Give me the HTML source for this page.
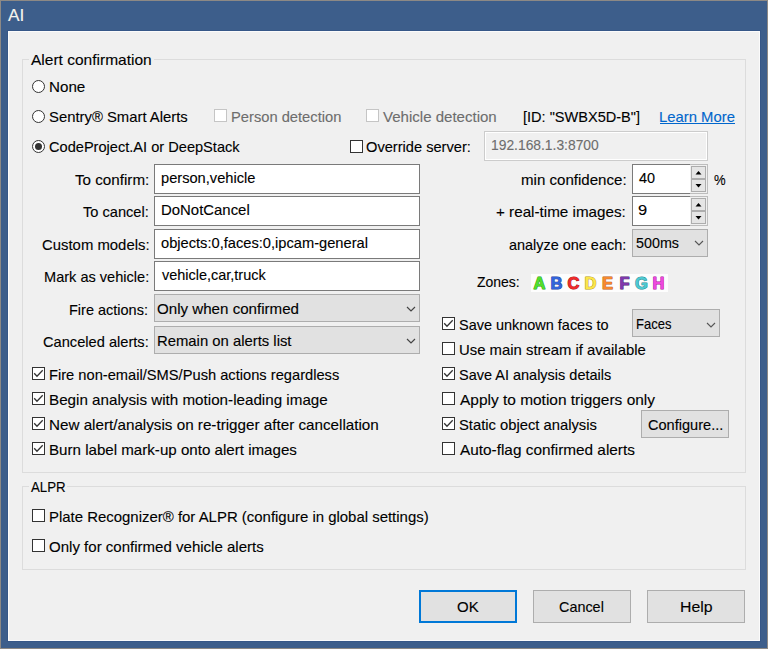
<!DOCTYPE html>
<html><head><meta charset="utf-8">
<style>
html,body{margin:0;padding:0;}
body{width:768px;height:649px;position:relative;overflow:hidden;background:#8d8985;font-family:"Liberation Sans",sans-serif;}
.a{position:absolute;box-sizing:border-box;}
.t{position:absolute;font-size:15px;line-height:20px;white-space:nowrap;transform-origin:0 0;-webkit-text-stroke:0.12px currentColor;}
.frame{left:1px;top:1px;width:766px;height:647px;background:#3d5e8b;}
.cl{left:7px;top:30px;width:754px;height:612px;background:#365788;}
.client{left:8px;top:31px;width:752px;height:610px;background:#f0f0f0;border:1px solid #fbfbfb;}
.grp{border:1px solid #dcdcdc;}
.gap{background:#f0f0f0;height:3px;}
.rb{width:13px;height:13px;border:1px solid #333;border-radius:50%;background:#fff;}
.dot{width:7px;height:7px;border-radius:50%;background:#333;}
.cb{width:13px;height:13px;border:1px solid #333;background:#fff;}
.cbd{width:13px;height:13px;border:1px solid #c5c5c5;background:#fff;}
.tb{border:1px solid #7a7a7a;background:#fff;}
.cmb{border:1px solid #adadad;background:#e1e1e1;}
.btn{border:1px solid #adadad;background:#e1e1e1;}
svg{position:absolute;overflow:visible;}
.z{position:absolute;top:274px;width:17px;text-align:center;font-weight:bold;font-size:17px;line-height:20px;}
</style></head><body>
<div class="a frame"></div>
<div class="a cl"></div>
<div class="a client"></div>

<!-- group boxes -->
<div class="a grp" style="left:22px;top:59px;width:724px;height:414px;"></div>
<div class="a gap" style="left:29px;top:58px;width:125px;"></div>
<div class="a grp" style="left:22px;top:486px;width:724px;height:84px;"></div>
<div class="a gap" style="left:29px;top:485px;width:38px;"></div>

<!-- radios -->
<div class="a rb" style="left:32px;top:80px;"></div>
<div class="a rb" style="left:32px;top:110px;"></div>
<div class="a rb" style="left:32px;top:140px;"></div>
<div class="a dot" style="left:35px;top:143px;"></div>

<!-- disabled checkboxes -->
<div class="a cbd" style="left:214px;top:109px;"></div>
<div class="a cbd" style="left:366px;top:109px;"></div>
<!-- override -->
<div class="a cb" style="left:350px;top:140px;"></div>
<!-- disabled textbox -->
<div class="a" style="left:484px;top:131px;width:224px;height:30px;border:1px solid #cccccc;background:#f0f0f0;box-shadow:inset 0 0 0 1px #fff;"></div>
<!-- link underline -->
<div class="a" style="left:660px;top:123px;width:75px;height:1px;background:#0066cc;"></div>

<!-- textboxes -->
<div class="a tb" style="left:154px;top:164px;width:266px;height:30px;"></div>
<div class="a tb" style="left:154px;top:196px;width:266px;height:30px;"></div>
<div class="a tb" style="left:154px;top:229px;width:266px;height:30px;"></div>
<div class="a tb" style="left:154px;top:261px;width:266px;height:30px;"></div>
<!-- combos -->
<div class="a cmb" style="left:154px;top:294px;width:266px;height:28px;"></div>
<div class="a cmb" style="left:154px;top:326px;width:266px;height:28px;"></div>

<!-- spinners -->
<div class="a" style="left:632px;top:164px;width:76px;height:30px;border:1px solid #bdbdbd;background:#f0f0f0;"></div>
<div class="a tb" style="left:632px;top:164px;width:58px;height:30px;border-right:none;"></div>
<div class="a btn" style="left:691px;top:166px;width:15px;height:13px;background:#e5e5e5;"></div>
<div class="a btn" style="left:691px;top:179px;width:15px;height:13px;background:#e5e5e5;"></div>
<div class="a" style="left:632px;top:196px;width:76px;height:30px;border:1px solid #bdbdbd;background:#f0f0f0;"></div>
<div class="a tb" style="left:632px;top:196px;width:58px;height:30px;border-right:none;"></div>
<div class="a btn" style="left:691px;top:198px;width:15px;height:13px;background:#e5e5e5;"></div>
<div class="a btn" style="left:691px;top:211px;width:15px;height:13px;background:#e5e5e5;"></div>
<svg style="left:0;top:0" width="768" height="649">
 <polygon points="695.5,174.5 698.5,171 701.5,174.5" fill="#000"/>
 <polygon points="695.5,184 698.5,187.5 701.5,184" fill="#000"/>
 <polygon points="695.5,206.5 698.5,203 701.5,206.5" fill="#000"/>
 <polygon points="695.5,216 698.5,219.5 701.5,216" fill="#000"/>
</svg>
<!-- analyze combo -->
<div class="a cmb" style="left:632px;top:229px;width:76px;height:28px;"></div>
<!-- faces combo -->
<div class="a cmb" style="left:632px;top:309px;width:88px;height:28px;"></div>


<!-- left checkboxes -->
<div class="a cb" style="left:32px;top:367px;"></div>
<div class="a cb" style="left:32px;top:392px;"></div>
<div class="a cb" style="left:32px;top:417px;"></div>
<div class="a cb" style="left:32px;top:442px;"></div>
<!-- right checkboxes -->
<div class="a cb" style="left:442px;top:317px;"></div>
<div class="a cb" style="left:442px;top:342px;"></div>
<div class="a cb" style="left:442px;top:367px;"></div>
<div class="a cb" style="left:442px;top:392px;"></div>
<div class="a cb" style="left:442px;top:417px;"></div>
<div class="a cb" style="left:442px;top:442px;"></div>
<!-- checks -->
<svg style="left:0;top:0" width="768" height="649">
 <g fill="none" stroke="#333" stroke-width="1.3">
  <polyline points="34.2,373.2 37,376.2 42.7,370.3"/>
  <polyline points="34.2,398.2 37,401.2 42.7,395.3"/>
  <polyline points="34.2,423.2 37,426.2 42.7,420.3"/>
  <polyline points="34.2,448.2 37,451.2 42.7,445.3"/>
  <polyline points="444.2,323.2 447,326.2 452.7,320.3"/>
  <polyline points="444.2,373.2 447,376.2 452.7,370.3"/>
  <polyline points="444.2,423.2 447,426.2 452.7,420.3"/>
 </g>
</svg>
<!-- configure button -->
<div class="a btn" style="left:641px;top:410px;width:88px;height:28px;"></div>

<!-- ALPR checkboxes -->
<div class="a cb" style="left:32px;top:509px;"></div>
<div class="a cb" style="left:32px;top:539px;"></div>

<!-- buttons -->
<div class="a btn" style="left:419px;top:590px;width:98px;height:33px;border:2px solid #0078d7;"></div>
<div class="a btn" style="left:533px;top:590px;width:98px;height:33px;"></div>
<div class="a btn" style="left:647px;top:590px;width:98px;height:33px;"></div>

<svg style="left:0;top:0" width="768" height="649">
 <polyline points="407,307 411,311 415,307" fill="none" stroke="#444" stroke-width="1.15"/>
 <polyline points="407,339 411,343 415,339" fill="none" stroke="#444" stroke-width="1.15"/>
 <polyline points="695,241 699,245 703,241" fill="none" stroke="#555" stroke-width="1.1"/>
 <polyline points="707,323 711,327 715,323" fill="none" stroke="#555" stroke-width="1.1"/>
</svg>

<div class=t style="left:8.30px;top:6px;color:#f6f4ee;transform:scaleX(1.0786);font-size:16.0px;">AI</div>
<div class=t style="left:31.00px;top:50px;color:#000;transform:scaleX(1.0345);">Alert confirmation</div>
<div class=t style="left:48.99px;top:77px;color:#000;transform:scaleX(1.0118);">None</div>
<div class=t style="left:48.91px;top:107px;color:#000;transform:scaleX(0.9892);">Sentry® Smart Alerts</div>
<div class=t style="left:230.82px;top:107px;color:#6d6d6d;transform:scaleX(0.9802);">Person detection</div>
<div class=t style="left:383.10px;top:107px;color:#6d6d6d;transform:scaleX(1.0027);">Vehicle detection</div>
<div class=t style="left:523.03px;top:107px;color:#000;transform:scaleX(0.9697);">[ID: "SWBX5D-B"]</div>
<div class=t style="left:659.31px;top:107px;color:#0066cc;transform:scaleX(0.9893);">Learn More</div>
<div class=t style="left:48.93px;top:137px;color:#000;transform:scaleX(0.9728);">CodeProject.AI or DeepStack</div>
<div class=t style="left:366.42px;top:137px;color:#000;transform:scaleX(0.9752);">Override server:</div>
<div class=t style="left:491.38px;top:135px;color:#6d6d6d;transform:scaleX(0.9226);">192.168.1.3:8700</div>
<div class=t style="left:74.80px;top:170px;color:#000;transform:scaleX(1.0125);">To confirm:</div>
<div class=t style="left:83.40px;top:202px;color:#000;transform:scaleX(0.9742);">To cancel:</div>
<div class=t style="left:41.51px;top:235px;color:#000;transform:scaleX(0.9925);">Custom models:</div>
<div class=t style="left:43.83px;top:267px;color:#000;transform:scaleX(0.9708);">Mark as vehicle:</div>
<div class=t style="left:69.43px;top:300px;color:#000;transform:scaleX(0.9662);">Fire actions:</div>
<div class=t style="left:43.32px;top:332px;color:#000;transform:scaleX(0.9755);">Canceled alerts:</div>
<div class=t style="left:160.52px;top:168px;color:#000;transform:scaleX(0.9758);">person,vehicle</div>
<div class=t style="left:160.51px;top:200px;color:#000;transform:scaleX(0.9943);">DoNotCancel</div>
<div class=t style="left:160.52px;top:233px;color:#000;transform:scaleX(0.9771);">objects:0,faces:0,ipcam-general</div>
<div class=t style="left:161.50px;top:265px;color:#000;transform:scaleX(0.9636);">vehicle,car,truck</div>
<div class=t style="left:157.29px;top:299px;color:#000;transform:scaleX(1.0079);">Only when confirmed</div>
<div class=t style="left:157.31px;top:331px;color:#000;transform:scaleX(0.9896);">Remain on alerts list</div>
<div class=t style="left:520.60px;top:170px;color:#000;transform:scaleX(1.0049);">min confidence:</div>
<div class=t style="left:496.19px;top:202px;color:#000;transform:scaleX(1.0143);">+ real-time images:</div>
<div class=t style="left:508.54px;top:235px;color:#000;transform:scaleX(0.9625);">analyze one each:</div>
<div class=t style="left:639.30px;top:168px;color:#000;transform:scaleX(0.9625);">40</div>
<div class=t style="left:638.20px;top:200px;color:#000;transform:scaleX(1.1000);">9</div>
<div class=t style="left:635.55px;top:233px;color:#000;transform:scaleX(0.9545);">500ms</div>
<div class=t style="left:714.40px;top:170px;color:#000;transform:scaleX(0.9000);font-size:14.5px;">%</div>
<div class=t style="left:476.80px;top:272px;color:#000;transform:scaleX(0.9311);">Zones:</div>
<div class=t style="left:635.93px;top:314px;color:#000;transform:scaleX(0.8667);">Faces</div>
<div class=t style="left:647.53px;top:415px;color:#000;transform:scaleX(0.9707);">Configure...</div>
<div class=t style="left:31.30px;top:477px;color:#000;transform:scaleX(0.8842);">ALPR</div>
<div class=t style="left:49.00px;top:507px;color:#000;transform:scaleX(0.9958);">Plate Recognizer® for ALPR (configure in global settings)</div>
<div class=t style="left:49.00px;top:537px;color:#000;transform:scaleX(1.0023);">Only for confirmed vehicle alerts</div>
<div class=t style="left:457.00px;top:597px;color:#000;transform:scaleX(1.0000);">OK</div>
<div class=t style="left:559.34px;top:597px;color:#000;transform:scaleX(0.9600);">Cancel</div>
<div class=t style="left:679.64px;top:597px;color:#000;transform:scaleX(1.0552);">Help</div>
<div class=t style="left:49.02px;top:365px;color:#000;transform:scaleX(0.9780);">Fire non-email/SMS/Push actions regardless</div>
<div class=t style="left:48.99px;top:390px;color:#000;transform:scaleX(1.0131);">Begin analysis with motion-leading image</div>
<div class=t style="left:48.99px;top:415px;color:#000;transform:scaleX(1.0142);">New alert/analysis on re-trigger after cancellation</div>
<div class=t style="left:48.99px;top:440px;color:#000;transform:scaleX(1.0078);">Burn label mark-up onto alert images</div>
<div class=t style="left:458.84px;top:315px;color:#000;transform:scaleX(0.9636);">Save unknown faces to</div>
<div class=t style="left:458.81px;top:340px;color:#000;transform:scaleX(0.9914);">Use main stream if available</div>
<div class=t style="left:458.83px;top:365px;color:#000;transform:scaleX(0.9660);">Save AI analysis details</div>
<div class=t style="left:459.80px;top:390px;color:#000;transform:scaleX(1.0302);">Apply to motion triggers only</div>
<div class=t style="left:458.82px;top:415px;color:#000;transform:scaleX(0.9842);">Static object analysis</div>
<div class=t style="left:459.80px;top:440px;color:#000;transform:scaleX(1.0234);">Auto-flag confirmed alerts</div>

<!-- zone letters -->
<div class="a" style="left:531px;top:274px;width:137px;height:18px;background:#fdfdfd;"></div>
<svg style="left:0;top:0" width="768" height="649"><g font-family="Liberation Sans" font-weight="bold" font-size="16.5" text-anchor="middle" stroke-width="1.0" paint-order="stroke" stroke-linejoin="round"><text x="539.5" y="289" fill="#4fe02a" stroke="#2a9a10">A</text><text x="556.5" y="289" fill="#3265dc" stroke="#1c3f9a">B</text><text x="573.5" y="289" fill="#f02a2a" stroke="#a81010">C</text><text x="590.5" y="289" fill="#fbe64a" stroke="#b89a08">D</text><text x="607.5" y="289" fill="#f78a2e" stroke="#b85810">E</text><text x="624.5" y="289" fill="#7f38ae" stroke="#4a1a70">F</text><text x="641.5" y="289" fill="#4cc9d2" stroke="#24868e">G</text><text x="658.5" y="289" fill="#ee48de" stroke="#a8209a">H</text></g></svg>
</body></html>
